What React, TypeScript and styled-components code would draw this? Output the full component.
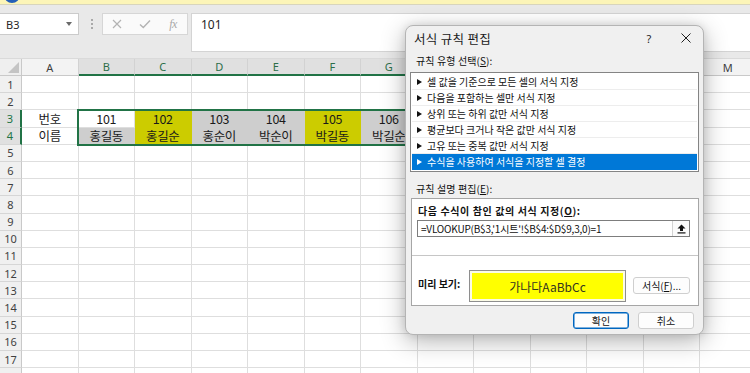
import React from 'react'
import styled, { createGlobalStyle } from 'styled-components'

const UI_FONT = `'Noto Sans CJK KR', 'Noto Sans', sans-serif`
const LATIN_FONT = `'Noto Sans', 'Noto Sans CJK KR', sans-serif`

const GlobalStyle = createGlobalStyle`
  html, body { margin: 0; padding: 0; background: #fff; }
  body { overflow: hidden; }
  * { box-sizing: border-box; }
`

type CellData = { text?: string; fill?: string }

const COLS = ['A', 'B', 'C', 'D', 'E', 'F', 'G', 'H', 'I', 'J', 'K', 'L', 'M']
const SELECTED_COLS = new Set(['B', 'C', 'D', 'E', 'F', 'G', 'H'])
const GREY = '#cecece'
const OLIVE = '#cccc00'
// row 18 only peeks in at the bottom edge, its number is below the fold
const VISIBLE_ROWS = 17

const ROWS: Record<number, CellData[]> = {
  3: [
    { text: '번호' },
    { text: '101' },
    { text: '102', fill: OLIVE },
    { text: '103', fill: GREY },
    { text: '104', fill: GREY },
    { text: '105', fill: OLIVE },
    { text: '106', fill: GREY },
    { fill: GREY },
  ],
  4: [
    { text: '이름' },
    { text: '홍길동', fill: GREY },
    { text: '홍길순', fill: OLIVE },
    { text: '홍순이', fill: GREY },
    { text: '박순이', fill: GREY },
    { text: '박길동', fill: OLIVE },
    { text: '박길순', fill: GREY },
    { fill: GREY },
  ],
}

const RULES = [
  '셀 값을 기준으로 모든 셀의 서식 지정',
  '다음을 포함하는 셀만 서식 지정',
  '상위 또는 하위 값만 서식 지정',
  '평균보다 크거나 작은 값만 서식 지정',
  '고유 또는 중복 값만 서식 지정',
  '수식을 사용하여 서식을 지정할 셀 결정',
]

export default function App() {
  const rowNumbers = Array.from({ length: VISIBLE_ROWS + 1 }, (_, i) => i + 1)

  return (
    <Screen>
      <GlobalStyle />
      <InfoStrip>
        <InfoDot />
      </InfoStrip>

      <FormulaBar>
        <NameBox>
          <span>B3</span>
          <Caret />
        </NameBox>
        <Grip />
        <EditButtons>
          <svg width='10' height='10' viewBox='0 0 10 10'>
            <path d='M1 1 L9 9 M9 1 L1 9' stroke='#b3b3b3' strokeWidth='1.2' fill='none' />
          </svg>
          <svg width='12' height='10' viewBox='0 0 12 10'>
            <path d='M1 5.5 L4.3 8.6 L11 1.5' stroke='#b3b3b3' strokeWidth='1.4' fill='none' />
          </svg>
          <FxLabel>fx</FxLabel>
        </EditButtons>
        <FormulaInput>101</FormulaInput>
      </FormulaBar>

      <Sheet>
        <Corner>
          <CornerMark />
        </Corner>
        {COLS.map((c) => (
          <ColHeader key={c} $selected={SELECTED_COLS.has(c)}>{c}</ColHeader>
        ))}
        {rowNumbers.map((r) => (
          <React.Fragment key={r}>
            <RowHeader $selected={r === 3 || r === 4}>{r <= VISIBLE_ROWS ? r : ''}</RowHeader>
            {COLS.map((c, i) => {
              const cell = ROWS[r]?.[i] ?? {}
              return (
                <Cell key={c} $fill={cell.fill}>{cell.text}</Cell>
              )
            })}
          </React.Fragment>
        ))}
        <SelectionFrame />
      </Sheet>

      <Dialog>
        <TitleBar>
          <Title>서식 규칙 편집</Title>
          <TitleButton>?</TitleButton>
          <TitleButton>
            <svg width='10' height='10' viewBox='0 0 10 10'>
              <path d='M0.5 0.5 L9.5 9.5 M9.5 0.5 L0.5 9.5' stroke='#1f1f1f' strokeWidth='1' fill='none' />
            </svg>
          </TitleButton>
        </TitleBar>

        <Body>
          <SectionLabel>
            규칙 유형 선택(<u>S</u>):
          </SectionLabel>
          <RuleList>
            {RULES.map((rule, i) => (
              <RuleItem key={rule} $active={i === RULES.length - 1}>
                <Arrow />
                <span>{rule}</span>
              </RuleItem>
            ))}
          </RuleList>

          <SectionLabel $gap={10}>
            규칙 설명 편집(<u>E</u>):
          </SectionLabel>
          <DescBox>
            <DescTop>
              <BoldLabel>
                다음 수식이 참인 값의 서식 지정(<u>O</u>):
              </BoldLabel>
              <FormulaField>
                <FormulaText>=VLOOKUP(B$3,'1시트'!$B$4:$D$9,3,0)=1</FormulaText>
                <CollapseButton>
                  <svg width='9' height='10' viewBox='0 0 9 10'>
                    <path d='M4.5 0.5 L8.5 4.5 L6 4.5 L6 7 L3 7 L3 4.5 L0.5 4.5 Z' fill='#111' />
                    <rect x='0.5' y='8.3' width='8' height='1.2' fill='#111' />
                  </svg>
                </CollapseButton>
              </FormulaField>
            </DescTop>
            <DescBottom>
              <PreviewLabel>미리 보기:</PreviewLabel>
              <PreviewBox>가나다AaBbCc</PreviewBox>
              <FormatButton>
                서식(<u>F</u>)...
              </FormatButton>
            </DescBottom>
          </DescBox>

          <ButtonRow>
            <DialogButton $primary>확인</DialogButton>
            <DialogButton>취소</DialogButton>
          </ButtonRow>
        </Body>
      </Dialog>
    </Screen>
  )
}

const Screen = styled.div`
  position: relative;
  width: 750px;
  height: 373px;
  overflow: hidden;
  display: flex;
  flex-direction: column;
  background: #ffffff;
  font-family: ${UI_FONT};
  color: #1b1b1b;
`

const InfoStrip = styled.div`
  flex: 0 0 5px;
  overflow: hidden;
  padding-left: 4px;
  background: #fcf5b8;
  border-bottom: 1px solid #d8d5bc;
`

const InfoDot = styled.div`
  width: 16px;
  height: 16px;
  margin-top: -13px;
  border-radius: 50%;
  background: #245fb8;
`

const FormulaBar = styled.div`
  flex: 0 0 54px;
  display: flex;
  align-items: flex-start;
  padding-top: 8px;
  background: #e9e9e9;
  border-bottom: 1px solid #dadada;
`

const NameBox = styled.div`
  width: 79px;
  height: 22px;
  display: flex;
  align-items: center;
  padding: 0 6px 0 6px;
  background: #ffffff;
  border: 1px solid #cbcbcb;
  border-left: 0;
  font-family: ${LATIN_FONT};
  font-size: 11px;
  color: #262626;
`

const Caret = styled.span`
  margin-left: auto;
  width: 0;
  height: 0;
  border-left: 3.5px solid transparent;
  border-right: 3.5px solid transparent;
  border-top: 4px solid #6a6a6a;
`

const Grip = styled.div`
  width: 2px;
  height: 10px;
  margin: 6px 9px 0 12px;
  border-left: 2px dotted #a9a9a9;
`

const EditButtons = styled.div`
  width: 86px;
  height: 22px;
  display: grid;
  grid-template-columns: repeat(3, 1fr);
  align-items: center;
  justify-items: center;
  background: #fafafa;
  border: 1px solid #d6d6d6;
`

const FxLabel = styled.span`
  font-family: 'Liberation Serif', serif;
  font-style: italic;
  font-size: 12px;
  color: #a9a9a9;
  letter-spacing: -0.5px;
`

const FormulaInput = styled.div`
  flex: 1;
  height: 39px;
  margin-left: 3px;
  padding: 2px 9px;
  background: #ffffff;
  border: 1px solid #d4d4d4;
  border-right: 0;
  font-family: ${LATIN_FONT};
  font-size: 12px;
  line-height: 17px;
  color: #1f1f1f;
`

const Sheet = styled.div`
  position: relative;
  flex: 1;
  display: grid;
  grid-template-columns: 22px repeat(13, 56.5px);
  grid-template-rows: 17px;
  grid-auto-rows: 17.2px;
  font-family: ${UI_FONT};
`

const HeaderBase = styled.div`
  display: flex;
  align-items: center;
  justify-content: center;
  font-family: ${LATIN_FONT};
  font-size: 11px;
`

const Corner = styled(HeaderBase)`
  position: relative;
  background: #efefef;
  border-right: 1px solid #c9c9c9;
  border-bottom: 1px solid #c9c9c9;
`

const CornerMark = styled.span`
  position: absolute;
  right: 2px;
  bottom: 2px;
  width: 0;
  height: 0;
  border-left: 11px solid transparent;
  border-bottom: 11px solid #c4c4c4;
`

const ColHeader = styled(HeaderBase)<{ $selected?: boolean }>`
  background: ${(p) => (p.$selected ? '#e0e0e0' : '#f3f3f3')};
  color: ${(p) => (p.$selected ? '#2c6e49' : '#3f3f3f')};
  border-right: 1px solid #d2d2d2;
  border-bottom: ${(p) => (p.$selected ? '2px solid #217346' : '1px solid #c9c9c9')};
`

const RowHeader = styled(HeaderBase)<{ $selected?: boolean }>`
  background: ${(p) => (p.$selected ? '#e0e0e0' : '#f0f0f0')};
  color: ${(p) => (p.$selected ? '#217346' : '#3f3f3f')};
  border-right: ${(p) => (p.$selected ? '2px solid #217346' : '1px solid #c9c9c9')};
  border-bottom: 1px solid #d6d6d6;
`

const Cell = styled.div<{ $fill?: string }>`
  display: flex;
  align-items: center;
  justify-content: center;
  overflow: hidden;
  white-space: nowrap;
  background: ${(p) => p.$fill ?? '#ffffff'};
  border-right: 1px solid ${(p) => p.$fill ?? '#dedede'};
  border-bottom: 1px solid ${(p) => p.$fill ?? '#dedede'};
  font-size: 12.5px;
  letter-spacing: -0.3px;
  color: #1a1a1a;
`

const SelectionFrame = styled.div`
  position: absolute;
  left: 77px;
  top: 50px;
  width: 420px;
  height: 37px;
  border: 2px solid #217346;
  pointer-events: none;
`

const Dialog = styled.div`
  position: absolute;
  left: 405px;
  top: 25px;
  width: 299px;
  height: 310px;
  display: flex;
  flex-direction: column;
  background: #f0f0f0;
  border: 1px solid #b4b4b4;
  border-radius: 8px;
  box-shadow: 0 6px 24px rgba(0, 0, 0, 0.3), 0 0 8px rgba(0, 0, 0, 0.1);
  font-family: ${UI_FONT};
  font-size: 10px;
  color: #111;
`

const TitleBar = styled.div`
  flex: 0 0 24px;
  display: flex;
  align-items: center;
  gap: 3px;
  padding-left: 8px;
`

const Title = styled.div`
  flex: 1;
  font-size: 12.5px;
  letter-spacing: 0.3px;
  color: #1a1a1a;
`

const TitleButton = styled.div`
  width: 34px;
  height: 24px;
  display: flex;
  align-items: center;
  justify-content: center;
  font-family: ${LATIN_FONT};
  font-size: 11px;
  color: #1f1f1f;
`

const Body = styled.div`
  flex: 1;
  display: flex;
  flex-direction: column;
  padding: 4px 4px 0 4px;
`

const SectionLabel = styled.div<{ $gap?: number }>`
  height: 14px;
  line-height: 14px;
  margin-top: ${(p) => p.$gap ?? 0}px;
  padding-left: 6px;
  letter-spacing: 0.1px;
  white-space: nowrap;
`

const RuleList = styled.div`
  height: 100px;
  margin-top: 4px;
  padding: 1px;
  background: #ffffff;
  border: 1px solid #848484;
`

const RuleItem = styled.div<{ $active?: boolean }>`
  height: 16px;
  display: flex;
  align-items: center;
  gap: 5px;
  padding-left: 5px;
  white-space: nowrap;
  letter-spacing: 0;
  background: ${(p) => (p.$active ? '#0078d7' : 'transparent')};
  color: ${(p) => (p.$active ? '#ffffff' : '#111111')};
  border-bottom: 1px solid ${(p) => (p.$active ? '#0078d7' : '#ededed')};
`

const Arrow = styled.span`
  width: 0;
  height: 0;
  border-top: 3.5px solid transparent;
  border-bottom: 3.5px solid transparent;
  border-left: 5px solid currentColor;
`

const DescBox = styled.div`
  height: 108px;
  margin: 2px 0 0 1px;
  display: flex;
  flex-direction: column;
  background: #ffffff;
  border: 1px solid #a6a6a6;
`

const DescTop = styled.div`
  flex: 0 0 57px;
  padding: 5px 8px 0 6px;
  border-bottom: 1px solid #c6c6c6;
`

const BoldLabel = styled.div`
  height: 14px;
  line-height: 14px;
  font-weight: 700;
  letter-spacing: 0.6px;
  white-space: nowrap;
`

const FormulaField = styled.div`
  height: 17px;
  margin: 2px 0 0 -1px;
  display: flex;
  border: 1px solid #7d7d7d;
  background: #ffffff;
`

const FormulaText = styled.div`
  flex: 1;
  padding-left: 3px;
  line-height: 15px;
  white-space: nowrap;
  letter-spacing: -0.2px;
`

const CollapseButton = styled.div`
  width: 17px;
  display: flex;
  align-items: center;
  justify-content: center;
  background: #fbfbfb;
  border-left: 1px solid #d3d3d3;
`

const DescBottom = styled.div`
  flex: 1;
  display: flex;
  align-items: flex-start;
  padding: 14px 8px 0 6px;
`

const PreviewLabel = styled.div`
  width: 51px;
  margin-top: 7px;
  line-height: 14px;
  font-weight: 700;
  white-space: nowrap;
`

const PreviewBox = styled.div`
  width: 157px;
  height: 32px;
  display: flex;
  align-items: center;
  justify-content: center;
  background: #ffff00;
  border: 1px solid #8e8e8e;
  box-shadow: inset 0 0 0 2px #fbfbe6;
  font-size: 12px;
  color: #333320;
`

const ButtonBase = styled.div`
  height: 17px;
  display: flex;
  align-items: center;
  justify-content: center;
  background: #fdfdfd;
  border: 1px solid #cfcfcf;
  border-radius: 3px;
  font-size: 10px;
  white-space: nowrap;
`

const FormatButton = styled(ButtonBase)`
  width: 57px;
  margin: 7px 0 0 7px;
`

const ButtonRow = styled.div`
  display: flex;
  justify-content: flex-end;
  gap: 9px;
  margin-top: 6px;
  padding-right: 5px;
`

const DialogButton = styled(ButtonBase)<{ $primary?: boolean }>`
  width: 56px;
  border-color: ${(p) => (p.$primary ? '#0067c0' : '#cfcfcf')};
  box-shadow: ${(p) => (p.$primary ? 'inset 0 0 0 0.5px #0067c0' : 'none')};
`
